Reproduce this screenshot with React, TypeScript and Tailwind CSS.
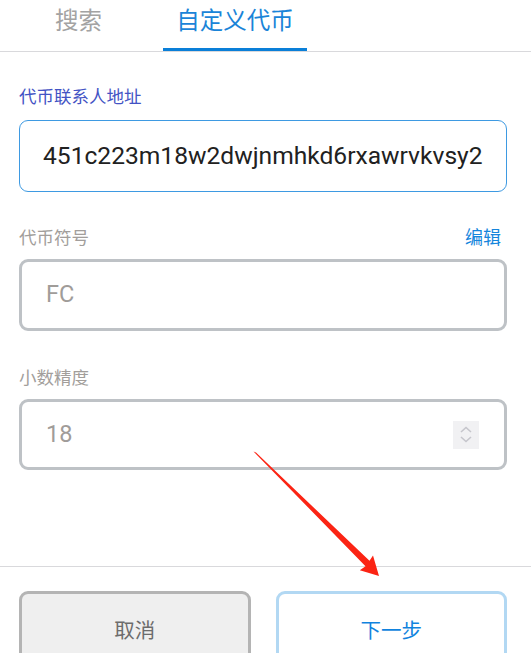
import React from "react";

const FONT = '"Roboto", "Noto Sans CJK SC", sans-serif';

export default function App() {
  return (
    <div
      className="relative w-[531px] h-[653px] overflow-hidden bg-white"
      style={{ fontFamily: FONT }}
    >
      {/* Tabs */}
      <div className="flex h-[52px] border-b border-[#d9d9dc]">
        <div className="ml-[41px] w-[75px] h-[51px] flex items-start justify-center pt-[8px] text-[23.5px] leading-[26px] text-[#a3a3a3]">
          搜索
        </div>
        <div className="ml-[47px] w-[144px] h-[51px] flex flex-col items-center justify-between pt-[8px] text-[23.5px] leading-[26px] text-[#1a84d8]">
          <span>自定义代币</span>
          <div className="w-full h-[3px] bg-[#0a7fd8]" />
        </div>
      </div>

      <div className="pl-[19px] pr-[24px]">
        {/* Field 1 */}
        <div className="mt-[33px] h-[24px] leading-[24px] text-[17.5px] text-[#4353c4]">
          代币联系人地址
        </div>
        <div className="mt-[11px] h-[72px] rounded-[9px] border border-[#3e9ae2] flex items-center pl-[23px] overflow-hidden">
          <span className="text-[24.6px] text-[#212121] whitespace-nowrap">
            451c223m18w2dwjnmhkd6rxawrvkvsy2
          </span>
        </div>

        {/* Field 2 */}
        <div className="mt-[34px] h-[24px] leading-[24px] flex justify-between text-[17.5px]">
          <span className="text-[#a29e9b]">代币符号</span>
          <span className="text-[#1585dc] text-[18px] mr-[6px]">编辑</span>
        </div>
        <div className="mt-[9px] h-[72px] rounded-[9px] border-[3px] border-[#bec2c6] flex items-center pl-[24px]">
          <span className="text-[23.5px] text-[#a09c99]">FC</span>
        </div>

        {/* Field 3 */}
        <div className="mt-[35px] h-[24px] leading-[24px] text-[17.5px] text-[#a29e9b]">
          小数精度
        </div>
        <div className="mt-[9px] h-[71px] rounded-[9px] border-[3px] border-[#bec2c6] flex items-center pl-[24px] pr-[25px]">
          <span className="text-[23.5px] text-[#a09c99] flex-1">18</span>
          <div className="w-[26px] h-[28px] bg-[#f1f1f3] flex flex-col items-center justify-center gap-[3px]">
            <svg width="12" height="7" viewBox="0 0 12 7">
              <path d="M1 6 L6 1.5 L11 6" fill="none" stroke="#c6c6cc" strokeWidth="1.6" />
            </svg>
            <svg width="12" height="7" viewBox="0 0 12 7">
              <path d="M1 1 L6 5.5 L11 1" fill="none" stroke="#c6c6cc" strokeWidth="1.6" />
            </svg>
          </div>
        </div>
      </div>

      {/* Divider */}
      <div className="mt-[96px] border-t border-[#d9d9dc]" />

      {/* Buttons */}
      <div className="mt-[24px] pl-[19px] pr-[24px] flex gap-[25px]">
        <button className="flex-1 h-[80px] rounded-[9px] border-[3px] border-[#b4b4b4] bg-[#efefef] text-[20.5px] text-[#6c6c6c] flex items-center justify-center">
          取消
        </button>
        <button className="flex-1 h-[80px] rounded-[9px] border-[3px] border-[#b2d8f3] bg-white text-[20.5px] text-[#1183de] flex items-center justify-center">
          下一步
        </button>
      </div>

      {/* Red annotation arrow */}
      <svg
        className="absolute left-0 top-0 pointer-events-none"
        width="531"
        height="653"
        viewBox="0 0 531 653"
      >
        <polygon
          points="253.5,451.5 256,452.5 369.5,560.8 373,555.5 379,576 359.8,570.2 365.5,566.2"
          fill="#fb2414"
        />
      </svg>
    </div>
  );
}
